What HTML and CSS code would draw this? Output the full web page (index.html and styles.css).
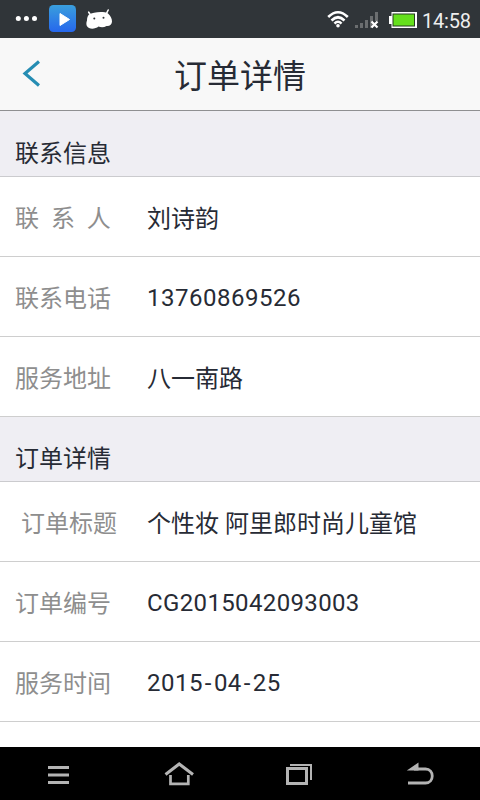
FILE: index.html
```
<!DOCTYPE html>
<html lang="zh-CN">
<head>
<meta charset="utf-8">
<title>订单详情</title>
<link rel="stylesheet" href="styles.css">
</head>
<body>
<div class="status">
  <svg class="status-left" width="130" height="38" viewBox="0 0 130 38">
    <defs>
      <linearGradient id="app" x1="0" y1="0" x2="0" y2="1"><stop offset="0" stop-color="#3a9fdc"/><stop offset="1" stop-color="#2667ed"/></linearGradient>
    </defs>
    <g fill="#fff"><circle cx="18.3" cy="18.5" r="2.5"/><circle cx="26.4" cy="18.5" r="2.5"/><circle cx="34.5" cy="18.5" r="2.5"/></g>
    <rect x="49" y="5" width="27" height="27" rx="4.5" fill="url(#app)"/>
    <path d="M60 13.5l9.5 6-9.5 6z" fill="#fff" stroke="#fff" stroke-width="1" stroke-linejoin="round"/>
    <path d="M88.700 12.200l2.200 3.200M108.200 10l-2 4" stroke="#fff" stroke-width="1.600" stroke-linecap="round"/>
    <path d="M89 14.500C93 12 104 11 108 13.500C110.500 15.500 112 18.500 112 21.500C112 24.500 109.500 26.500 106.500 26C104 27.500 101 27.500 98.500 26.500C96 28.500 92 29.300 89 28C86 26.500 86 23 87 20.500C87 18 87.500 16 89 14.500Z" fill="#fff"/>
    <circle cx="94.300" cy="18.500" r="1" fill="#303539"/><circle cx="103.500" cy="17.700" r="1" fill="#303539"/>
  </svg>
  <svg class="status-right" width="95" height="38" viewBox="325 0 95 38">
    <g fill="none" stroke="#fff" stroke-width="2.600">
      <path d="M328.200 17Q338 7.500 347.800 17"/><path d="M331.500 20.500Q338 14 344.500 20.500"/><path d="M334.500 23.600Q338 20 341.500 23.600"/>
    </g>
    <circle cx="338" cy="25.700" r="1.800" fill="#fff"/>
    <g fill="#6b6e70"><rect x="355" y="25" width="3" height="3"/><rect x="360" y="23" width="3" height="5"/><rect x="365" y="20" width="3" height="8"/><rect x="370" y="16" width="3" height="12"/><rect x="375" y="12" width="3" height="9"/></g>
    <path d="M371.500 21.500l6 6m0-6l-6 6" stroke="#fff" stroke-width="2.200"/>
    <path d="M391.500 12H417V28H391.500V24H389V16H391.500Z" fill="#fff"/>
    <rect x="392.500" y="13.500" width="22.500" height="13" fill="#263c20"/><rect x="393.500" y="14.500" width="20.500" height="11" fill="#65e01c"/>
  </svg>
  <span class="clock">14:58</span>
</div>
<header class="header">
  <svg class="back" width="20" height="30" viewBox="0 0 20 30"><path d="M19 2.500L5 14.500L19 26.500" fill="none" stroke="#258db3" stroke-width="3.200"/></svg>
  <h1 class="title">订单详情</h1>
</header>
<main class="content">
  <h2 class="section">联系信息</h2>
  <div class="row"><span class="label">联  系  人</span><span class="value">刘诗韵</span></div>
  <div class="row"><span class="label">联系电话</span><span class="value num">13760869526</span></div>
  <div class="row"><span class="label">服务地址</span><span class="value">八一南路</span></div>
  <h2 class="section">订单详情</h2>
  <div class="row"><span class="label"> 订单标题</span><span class="value">个性妆 阿里郎时尚儿童馆</span></div>
  <div class="row"><span class="label">订单编号</span><span class="value num code">CG2015042093003</span></div>
  <div class="row"><span class="label">服务时间</span><span class="value num">2015<span class="dash">-</span>04<span class="dash">-</span>25</span></div>
</main>
<nav class="nav">
  <svg width="120" height="53" viewBox="0 747 120 53" fill="#b4b4b4"><path d="M48 766h21v3H48zM48 773.500h21v3H48zM48 781h21v3H48z"/></svg>
  <svg width="120" height="53" viewBox="120 747 120 53" fill="none" stroke="#b4b4b4" stroke-width="3"><path d="M165.500 774.500L179.200 764L193 774.500"/><path d="M170.500 775V783.800H188.300V775" stroke-width="2.700"/></svg>
  <svg width="120" height="53" viewBox="240 747 120 53" fill="none" stroke="#b4b4b4"><rect x="287.500" y="768.500" width="19" height="15" stroke-width="3"/><path d="M290 765H311V780" stroke-width="2"/></svg>
  <svg width="120" height="53" viewBox="360 747 120 53"><path d="M414 769H425.500C434.500 769 434.500 783 425.500 783H408" fill="none" stroke="#b4b4b4" stroke-width="2.800"/><path d="M406.800 770.400L418.500 762.500V770.400Z" fill="#b4b4b4"/></svg>
</nav>
</body>
</html>
```
FILE: styles.css
```
* { box-sizing: border-box; }
body {
  margin: 0;
  width: 480px;
  height: 800px;
  display: flex;
  flex-direction: column;
  overflow: hidden;
  background: #fff;
  color: #272b35;
  font-family: Roboto, "Noto Sans CJK SC", sans-serif;
}
svg { display: block; flex: none; }
.status {
  height: 38px;
  flex: none;
  display: flex;
  background: #303539;
}
.status-right { margin-left: 195px; }
.clock {
  margin-left: 2px;
  padding-top: 2px;
  font-size: 20px;
  line-height: 38px;
  letter-spacing: -0.2px;
  color: #eee;
  white-space: nowrap;
}
.header {
  height: 73px;
  flex: none;
  display: grid;
  grid-template-columns: 80px 1fr 80px;
  align-items: center;
  background: #f8f8f8;
  border-bottom: 1px solid #8f8f91;
}
.back { margin-left: 20px; }
.title {
  margin: 0;
  padding-top: 5px;
  text-align: center;
  font-size: 33px;
  line-height: 48px;
  font-weight: 400;
}
.content { flex: 1; min-height: 0; }
.section {
  margin: 0;
  height: 65px;
  padding: 24px 15px 0;
  font-size: 24px;
  line-height: 36px;
  font-weight: 400;
  background: #efeef3;
  border-bottom: 1px solid #cbcbce;
}
.section:first-child {
  height: 66px;
  padding-top: 25px;
}
.row {
  height: 80px;
  display: flex;
  align-items: center;
  padding: 4px 15px 0;
  border-bottom: 1px solid #cecece;
  font-size: 24px;
  line-height: 36px;
  white-space: pre;
}
.label { width: 132px; color: #8e8e8e; }
.num { letter-spacing: 0.5px; margin-top: -2px; }
.code { letter-spacing: 0.36px; }
.dash { padding: 0 1.9px; }
.nav {
  height: 53px;
  flex: none;
  display: flex;
  background: #000;
}
```
